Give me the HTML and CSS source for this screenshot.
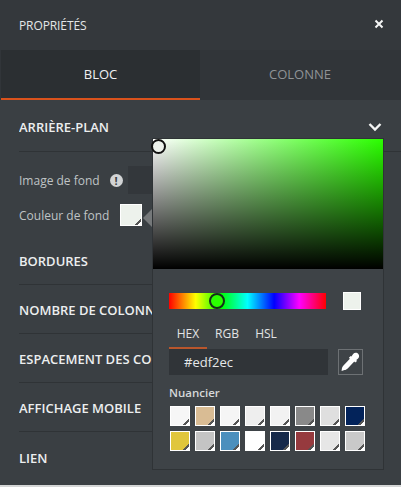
FILE: index.html
```html
<!DOCTYPE html>
<html lang="fr">
<head>
<meta charset="utf-8">
<title>Propriétés</title>
<link rel="stylesheet" href="styles.css">
</head>
<body>
<div class="panel">
  <header class="head">
    <span>PROPRIÉTÉS</span>
    <svg class="close" width="10" height="10" viewBox="0 0 10 10"><path d="M1.5 1.5l7 7M8.5 1.5l-7 7" stroke="#f4f5f5" stroke-width="2" fill="none"/></svg>
  </header>
  <nav class="tabs">
    <div class="tab active">BLOC</div>
    <div class="tab">COLONNE</div>
  </nav>
  <section class="row first">
    <span>ARRIÈRE-PLAN</span>
    <svg class="chev" width="14" height="10" viewBox="0 0 14 10"><path d="M1.5 2l5.5 5.5L12.500 2" stroke="#f4f5f5" stroke-width="2.400" fill="none"/></svg>
  </section>
  <section class="fields">
    <div class="field">
      <label>Image de fond</label>
      <span class="info">!</span>
      <div class="imginput"></div>
    </div>
    <div class="field second">
      <label>Couleur de fond</label>
      <div class="swatch big"></div>
    </div>
  </section>
  <section class="row">BORDURES</section>
  <section class="row">NOMBRE DE COLONNES</section>
  <section class="row">ESPACEMENT DES COLONNES</section>
  <section class="row">AFFICHAGE MOBILE</section>
  <section class="row last">LIEN</section>
</div>
<div class="strip"></div>

<div class="arrow"></div>
<aside class="picker">
  <div class="sat"><span class="satknob"></span></div>
  <div class="picker-body">
    <div class="hue-row">
      <div class="hue"><span class="hueknob"></span></div>
      <div class="preview"></div>
    </div>
    <div class="modes">
      <span class="mode on">HEX</span>
      <span class="mode">RGB</span>
      <span class="mode">HSL</span>
    </div>
    <div class="hex-row">
      <div class="hex">#edf2ec</div>
      <div class="dropper">
        <svg width="21" height="21" viewBox="0 0 20 20"><path d="M12.500 1.800c1.500-1.500 3.900-1.300 5 .1 1.100 1.300.9 3.300-.5 4.500l-1.500 1.300.7.800-1.700 1.500-.9-.9-6.300 6.600c-.8.800-1.900 1.400-3 1.500L1.500 18l.3-2.300c.2-1 .6-1.900 1.300-2.700l6.300-6.600-.9-.9 1.700-1.700.7.600z" fill="#fff"/></svg>
      </div>
    </div>
    <div class="nuancier">Nuancier</div>
    <div class="grid">
      <div class="swatch c1"></div><div class="swatch c2"></div><div class="swatch c3"></div><div class="swatch c4"></div>
      <div class="swatch c5"></div><div class="swatch c6"></div><div class="swatch c7"></div><div class="swatch c8"></div>
      <div class="swatch c9"></div><div class="swatch c10"></div><div class="swatch c11"></div><div class="swatch c12"></div>
      <div class="swatch c13"></div><div class="swatch c14"></div><div class="swatch c15"></div><div class="swatch c16"></div>
    </div>
  </div>
</aside>
</body>
</html>
```
FILE: styles.css
```css
* { box-sizing: border-box; }
html, body { margin: 0; padding: 0; }
body {
  width: 401px;
  height: 487px;
  overflow: hidden;
  position: relative;
  background: #d4d6d6;
  font-family: "Open Sans", sans-serif;
  color: #e6e8e9;
}
.panel { height: 485px; background: #3a3f43; overflow: hidden; }
.head {
  height: 50px;
  background: #34383c;
  display: flex;
  align-items: center;
  justify-content: space-between;
  padding: 0 17px 0 19px;
  font-size: 12px;
  letter-spacing: -0.1px;
  color: #e4e6e7;
}
.close { margin-top: -3px; }
.tabs { display: flex; height: 50px; background: #313539; }
.tab {
  width: 200px;
  display: flex;
  align-items: center;
  justify-content: center;
  padding-bottom: 2px;
  font-size: 13px;
  color: #8f9396;
}
.tab.active {
  margin-left: 1px;
  background: #2b2f32;
  color: #f0f1f2;
  border-bottom: 2px solid #d9521c;
  padding-bottom: 0;
  width: 199px;
}
.row {
  width: 133px;
  height: 49px;
  margin-left: 19px;
  border-bottom: 1px solid #2f3336;
  display: flex;
  align-items: center;
  justify-content: space-between;
  font-size: 13px;
  font-weight: 600;
  color: #eceeef;
  white-space: nowrap;
  overflow: hidden;
  padding-top: 2px;
}
.row.first { width: auto; height: 52px; padding-right: 19px; padding-top: 3px; }
.row.last { border-bottom: 0; }
.fields { height: 84px; margin-left: 19px; padding-top: 14px; font-size: 12px; color: #bfc3c5; }
.field { display: flex; align-items: center; height: 28px; }
.field.second { height: 22px; margin-top: 10px; }
.info {
  width: 13px;
  height: 13px;
  margin-left: 10px;
  border-radius: 50%;
  background: #d2d4d5;
  color: #3a3f43;
  font-size: 11px;
  font-weight: 700;
  line-height: 13px;
  text-align: center;
}
.imginput { width: 60px; height: 28px; margin-left: 5px; background: #33373b; }
.swatch {
  position: relative;
  width: 20px;
  height: 20px;
  border: 1px solid #fff;
  background-clip: padding-box;
  overflow: hidden;
}
.swatch::after {
  content: "";
  position: absolute;
  right: -1px;
  bottom: -1px;
  width: 8px;
  height: 8px;
  background: linear-gradient(135deg, transparent 50%, #555 50%, #555 66%, #fff 66%);
}
.swatch.big { width: 22px; height: 22px; margin-left: 11px; background-color: #edf2ec; }
.strip { height: 2px; }
.arrow {
  position: absolute;
  left: 143px;
  top: 208px;
  width: 0;
  height: 0;
  border-top: 10px solid transparent;
  border-bottom: 10px solid transparent;
  border-right: 10px solid #75787a;
}
.picker {
  position: absolute;
  left: 152px;
  top: 138px;
  width: 232px;
  height: 332px;
  background: #3e4347;
  border: 1px solid #2f3336;
}
.sat {
  position: relative;
  height: 130px;
  background:
    linear-gradient(to bottom, transparent, #000),
    linear-gradient(to right, #fff, #2bff00);
}
.satknob {
  position: absolute;
  left: -2px;
  top: 0;
  width: 15px;
  height: 15px;
  border: 2px solid #111;
  border-radius: 50%;
  background: #edf2ec;
}
.picker-body { padding: 24px 20px 0 16px; }
.hue-row { display: flex; align-items: flex-start; justify-content: space-between; height: 18px; }
.hue {
  position: relative;
  width: 157px;
  height: 16px;
  background: linear-gradient(to right, #f00, #ff0 17%, #0f0 33%, #0ff 50%, #00f 67%, #f0f 83%, #f00);
}
.hueknob {
  position: absolute;
  left: 40px;
  top: 0;
  width: 16px;
  height: 16px;
  border: 2px solid #14301a;
  border-radius: 50%;
  background: #2bff00;
}
.preview { width: 18px; height: 18px; margin: -1px 2px 0 0; background: #edf2ec; border: 1px solid #fff; }
.modes { display: flex; margin-top: 14px; height: 24px; font-size: 12px; color: #e2e4e5; }
.mode { width: 38px; text-align: center; }
.mode:nth-child(3) { margin-left: 1px; }
.mode.on { border-bottom: 2px solid #b9562c; margin-right: 1px; }
.hex-row { display: flex; justify-content: space-between; height: 26px; }
.hex {
  width: 159px;
  height: 26px;
  background: #303438;
  font-size: 13px;
  line-height: 26px;
  padding-left: 15px;
  color: #e6e8e9;
}
.dropper {
  width: 25px;
  height: 26px;
  border: 1px solid #6d7174;
  display: flex;
  align-items: center;
  justify-content: center;
}
.nuancier { margin-top: 10px; font-size: 11.500px; color: #d5d8d9; font-weight: 600; }
.grid { display: grid; grid-template-columns: repeat(8, 20px); gap: 5px; margin-top: 6px; margin-left: 1px; }
.c1 { background-color: #f6f6f6; }
.c2 { background-color: #d9bc94; }
.c3 { background-color: #f5f5f5; }
.c4 { background-color: #eeeeee; }
.c5 { background-color: #f2f2f2; }
.c6 { background-color: #898989; }
.c7 { background-color: #dfdfdf; }
.c8 { background-color: #03235a; }
.c9 { background-color: #e0c63c; }
.c10 { background-color: #c4c4c4; }
.c11 { background-color: #4b8fbd; }
.c12 { background-color: #ffffff; }
.c13 { background-color: #16294a; }
.c14 { background-color: #963a3e; }
.c15 { background-color: #e6e6e6; }
.c16 { background-color: #c9c9c9; }
```
